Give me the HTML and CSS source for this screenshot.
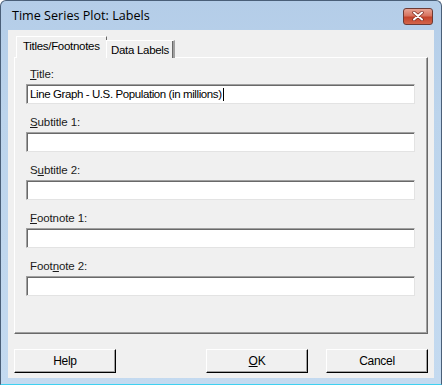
FILE: index.html
```html
<!DOCTYPE html>
<html lang="en">
<head>
    <meta charset="UTF-8">
    <title>Time Series Plot: Labels</title>
    <link rel="stylesheet" href="styles.css">
</head>
<body>

    <div class="window">
        <div class="titlebar">
            <span class="caption">Time Series Plot: Labels</span>
            <div class="close-btn">
                <svg width="14" height="10" viewBox="0 0 14 10">
                    <path d="M3 1.5 L11 8.5 M11 1.5 L3 8.5" stroke="#7a2a20" stroke-width="3.4" stroke-linecap="round"/>
                    <path d="M3 1.5 L11 8.5 M11 1.5 L3 8.5" stroke="#fff" stroke-width="2" stroke-linecap="round"/>
                </svg>
            </div>
        </div>

        <div class="client">
            <div class="tabs">
                <div class="tab active">Titles/Footnotes</div>
                <div class="tab">Data Labels</div>
            </div>

            <div class="panel">
                <div class="field">
                    <label><u>T</u>itle:</label>
                    <div class="textbox">Line Graph - U.S. Population (in millions)<span class="caret"></span></div>
                </div>
                <div class="field">
                    <label><u>S</u>ubtitle 1:</label>
                    <div class="textbox"></div>
                </div>
                <div class="field">
                    <label>S<u>u</u>btitle 2:</label>
                    <div class="textbox"></div>
                </div>
                <div class="field">
                    <label><u>F</u>ootnote 1:</label>
                    <div class="textbox"></div>
                </div>
                <div class="field">
                    <label>Foot<u>n</u>ote 2:</label>
                    <div class="textbox"></div>
                </div>
            </div>

            <div class="buttons">
                <button class="btn">Help</button>
                <div class="spacer"></div>
                <button class="btn"><u>O</u>K</button>
                <button class="btn">Cancel</button>
            </div>
        </div>
    </div>

</body>
</html>
```

FILE: styles.css
```css
body {
    margin: 0;
    font-family: "Liberation Sans", Arial, sans-serif;
    font-size: 11px;
    color: #000;
}

.window {
    box-sizing: border-box;
    width: 442px;
    height: 385px;
    display: flex;
    flex-direction: column;
    background: linear-gradient(to bottom, #b4cde8 0%, #bcd4ec 30%, #c4daf0 100%);
    border: 1px solid #4a5f78;
    border-bottom: 1px solid #3fd0f0;
    border-radius: 6px 6px 0 0;
    padding: 0 7px 6px 7px;
}

.titlebar {
    height: 29px;
    display: flex;
    align-items: center;
    justify-content: space-between;
    padding-left: 4px;
}

.caption {
    font-family: "Open Sans", "Liberation Sans", sans-serif;
    font-size: 12.6px;
    color: #000;
    margin-top: -1px;
}

.close-btn {
    width: 30px;
    height: 17px;
    margin-top: 1px;
    margin-right: 1px;
    box-sizing: border-box;
    border: 1px solid #6d3a34;
    border-radius: 3px;
    background: linear-gradient(to bottom, #e8a393 0%, #d7735f 45%, #c4432b 55%, #d3654a 100%);
    display: flex;
    align-items: center;
    justify-content: center;
}

.client {
    flex: 1;
    background-color: #f0f0f0;
    padding: 6px 6px 0 6px;
    display: flex;
    flex-direction: column;
}

.tabs {
    display: flex;
    align-items: flex-end;
    padding-left: 2px;
    height: 22px;
    position: relative;
    z-index: 1;
    margin-bottom: -1px;
}

.tab {
    box-sizing: border-box;
    height: 18px;
    padding: 0 4px 0 4px;
    border-top: 1px solid #fff;
    border-left: 1px solid #fff;
    border-right: 2px solid #a0a0a0;
    box-shadow: inset -1px 0 0 #696969;
    line-height: 18px;
    font-size: 11.5px;
    letter-spacing: -0.3px;
    background: #f0f0f0;
}

.tab.active {
    height: 22px;
    width: 91px;
    padding-left: 6px;
    line-height: 19px;
    margin-right: -1px;
    border-right: 1px solid #696969;
    box-shadow: none;
}

.panel {
    box-sizing: border-box;
    height: 277px;
    border-top: 1px solid #fff;
    border-left: 1px solid #fff;
    border-right: 1px solid #696969;
    border-bottom: 1px solid #696969;
    box-shadow: inset -1px -1px 0 #a0a0a0;
    padding: 9px 12px 0 11px;
}

.field {
    margin-bottom: 11px;
}

.field label {
    display: block;
    height: 14px;
    line-height: 14px;
    padding-left: 4px;
    margin-bottom: 3px;
    font-size: 11.5px;
    letter-spacing: -0.1px;
    color: #1a1a1a;
}

.textbox {
    box-sizing: border-box;
    height: 20px;
    background: #fff;
    border-top: 1px solid #a0a0a0;
    border-left: 1px solid #a0a0a0;
    border-right: 1px solid #e3e3e3;
    border-bottom: 1px solid #e3e3e3;
    box-shadow: inset 1px 1px 0 #696969;
    padding-left: 3px;
    line-height: 18px;
    font-size: 11.5px;
    letter-spacing: -0.4px;
    white-space: nowrap;
}

.caret {
    display: inline-block;
    width: 1px;
    height: 13px;
    background: #000;
    vertical-align: -3px;
    margin-left: 1px;
}

.buttons {
    display: flex;
    gap: 18px;
    margin-top: 15px;
}

.spacer {
    flex: 1;
}

.btn {
    box-sizing: border-box;
    width: 102px;
    height: 24px;
    margin: 0;
    background: #f0f0f0;
    border-top: 1px solid #fff;
    border-left: 1px solid #fff;
    border-right: 1px solid #000;
    border-bottom: 1px solid #000;
    box-shadow: inset -1px -1px 0 #a0a0a0;
    font-family: "Liberation Sans", Arial, sans-serif;
    font-size: 12px;
    letter-spacing: -0.3px;
    color: #000;
    padding: 0;
}
```
